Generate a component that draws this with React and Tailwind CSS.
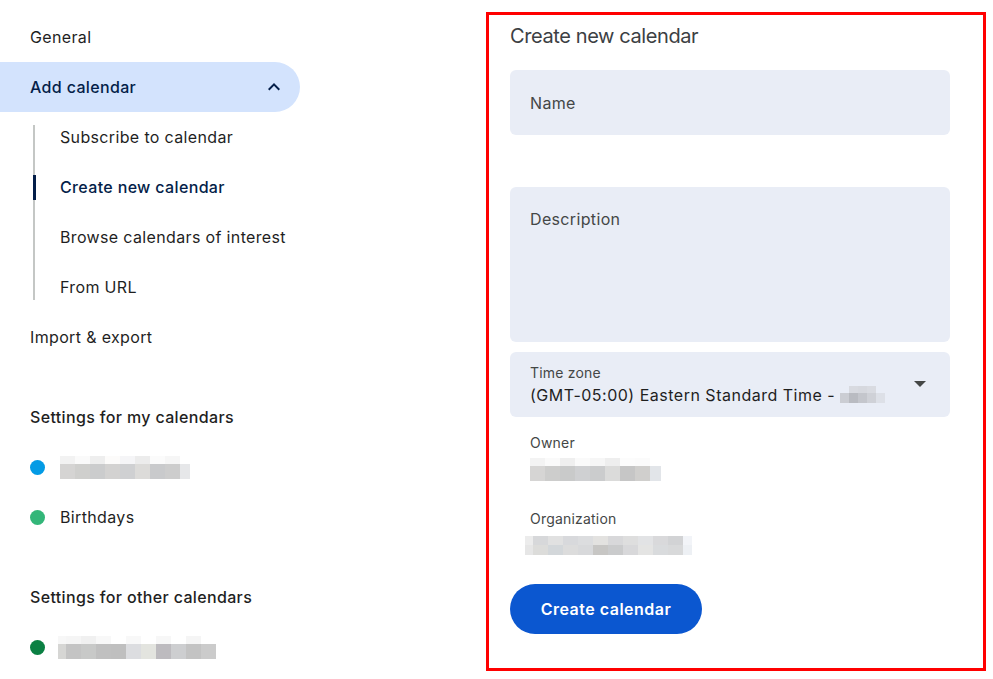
import React from "react";

const font = { fontFamily: "Inter, 'Open Sans', Arial, sans-serif" };

// pixelated (redacted) text block: two rows of cells
const Blur = ({ top, bottom, cell = 15, first = 15, last, topH = 8, botH = 15 }) => {
  const width = (i, n) => (i === 0 ? first : i === n - 1 && last ? last : cell);
  return (
    <div className="flex flex-col">
      <div className="flex">
        {top.map((c, i) => (
          <div key={i} style={{ background: c, width: width(i, top.length), height: topH }} />
        ))}
      </div>
      <div className="flex">
        {bottom.map((c, i) => (
          <div key={i} style={{ background: c, width: width(i, bottom.length), height: botH }} />
        ))}
      </div>
    </div>
  );
};

const NavRow = ({ children, className = "" }) => (
  <div className={`flex h-[50px] items-center pl-[30px] text-[16px] tracking-[0.35px] text-[#1f1f1f] ${className}`}>
    {children}
  </div>
);

const SubRow = ({ children, active }) => (
  <div className="relative flex h-[50px] items-center pl-[60px] text-[16px] tracking-[0.35px]">
    {active && <div className="absolute left-[33px] top-[13px] h-[25px] w-[3px] bg-[#041e49]" />}
    <span className={active ? "font-medium text-[#041e49]" : "text-[#1f1f1f]"}>{children}</span>
  </div>
);

const CalRow = ({ dot, children }) => (
  <div className="flex h-[50px] items-center pl-[30px]">
    <div className="h-[15px] w-[15px] rounded-full" style={{ background: dot }} />
    <div className="ml-[15px] text-[16px] tracking-[0.35px] text-[#1f1f1f]">{children}</div>
  </div>
);

const Sidebar = () => (
  <div className="w-[300px] shrink-0 pt-[12px]">
    <NavRow>General</NavRow>
    <div className="flex h-[50px] items-center justify-between rounded-r-full bg-[#d3e3fd] pl-[30px] pr-[14px]">
      <span className="text-[16px] font-medium tracking-[0.35px] text-[#041e49]">Add calendar</span>
      <svg width="24" height="24" viewBox="0 0 24 24">
        <path d="M7.41 15.41 12 10.83l4.59 4.58L18 14l-6-6-6 6z" fill="#041e49" />
      </svg>
    </div>
    <div className="relative">
      <div className="absolute left-[33px] top-[13px] h-[175px] w-[2px] bg-[#c4c7c5]" />
      <SubRow>Subscribe to calendar</SubRow>
      <SubRow active>Create new calendar</SubRow>
      <SubRow>Browse calendars of interest</SubRow>
      <SubRow>From URL</SubRow>
    </div>
    <NavRow>Import &amp; export</NavRow>
    <NavRow className="mt-[30px] font-medium">Settings for my calendars</NavRow>
    <CalRow dot="#039be5">
      <Blur
        last={10}
        top={["#f2f2f2", "#fafafa", "#eeeeee", "#fcfbfa", "#f5f5f7", "#ececec", "#fbfbfb", "#f6f6f6", "#ffffff"]}
        bottom={["#d5d4d3", "#cfcfcd", "#cbcccd", "#d3d2d1", "#cfd0d2", "#dcdbd9", "#c9cacc", "#cdcdcd", "#e6e7e9"]}
      />
    </CalRow>
    <CalRow dot="#33b679">Birthdays</CalRow>
    <NavRow className="mt-[30px] font-medium">Settings for other calendars</NavRow>
    <div className="flex h-[50px] items-center pl-[30px]">
      <div className="h-[15px] w-[15px] rounded-full bg-[#0b8043]" />
      <div className="ml-[13px]">
        <Blur
          first={8}
          top={["#f7f7f7", "#f5f5f5", "#f0f0f0", "#f8f8f8", "#ffffff", "#f8f8f8", "#ffffff", "#f7f7f7", "#ffffff", "#f5f5f5", "#ffffff"]}
          bottom={["#d6d6d4", "#c4c4c4", "#c8c9c8", "#c0c0c0", "#bfbfbf", "#dcdde0", "#e3e4df", "#bdbbbf", "#cdced0", "#c3c3c3", "#cbcbcb"]}
        />
      </div>
    </div>
  </div>
);

const Field = ({ className = "", children }) => (
  <div className={`rounded-[6px] bg-[#e9edf6] ${className}`}>{children}</div>
);

const CreateCalendar = () => (
  <div className="ml-[186px] mt-[12px] h-[659px] w-[500px] border-[3px] border-[#ff0000] pl-[21px] pt-[7px]">
    <div className="h-[28px] text-[20px] leading-[28px] tracking-[-0.4px] text-[#3c4043]">Create new calendar</div>
    <div className="mt-[20px] w-[440px]">
      <Field className="flex h-[65px] items-center pl-[20px]">
        <span className="text-[16px] tracking-[0.35px] text-[#444746]">Name</span>
      </Field>
      <Field className="mt-[52px] h-[155px] pl-[20px] pt-[20px]">
        <span className="text-[16px] leading-[24px] tracking-[0.35px] text-[#444746]">Description</span>
      </Field>
      <Field className="mt-[10px] flex h-[65px] items-center justify-between pl-[20px] pr-[24px]">
        <div className="flex flex-col">
          <span className="text-[14px] leading-[20px] tracking-[0.2px] text-[#444746]">Time zone</span>
          <div className="flex items-center">
            <span className="text-[16px] leading-[24px] tracking-[0.5px] text-[#1f1f1f]">(GMT-05:00) Eastern Standard Time -&nbsp;</span>
            <Blur
              cell={9}
              first={9}
              topH={7}
              botH={10}
              top={["#e9edf6", "#d8dae0", "#d6d8de", "#d9dbe1", "#e9edf6"]}
              bottom={["#cbcdd3", "#b9bbc1", "#c4c6cc", "#cfd1d7", "#dde0e7"]}
            />
          </div>
        </div>
        <svg width="12" height="6" viewBox="0 0 12 6" className="mb-[2px]">
          <path d="M0 0h12L6 6z" fill="#444746" />
        </svg>
      </Field>
      <div className="pl-[20px] pt-[16px]">
        <div className="text-[14px] leading-[20px] tracking-[0.2px] text-[#444746]">Owner</div>
        <div className="mt-[5px]">
          <Blur
            last={11}
            top={["#f3f3f3", "#fafafa", "#efefef", "#fafafa", "#f6f6f6", "#eeeeee", "#fcfcfc", "#fbfbfb", "#ffffff"]}
            bottom={["#d6d5d4", "#cdcdcc", "#c9caca", "#cfd0d2", "#cbcccd", "#dbdbda", "#c6c6c6", "#d0cfcd", "#e2e5e9"]}
          />
        </div>
        <div className="mt-[28px] text-[14px] leading-[20px] tracking-[0.2px] text-[#444746]">Organization</div>
        <div className="-ml-[5px] mt-[7px]">
          <Blur
            first={8}
            last={9}
            topH={9}
            botH={10}
            top={["#ececec", "#d7d8da", "#e1e1e1", "#d8d9dc", "#dcdddf", "#e3e2e0", "#d8d8da", "#dedede", "#e2e3e5", "#d9d9db", "#d2d3d5", "#f2f4f8"]}
            bottom={["#e6e6e6", "#dcdcda", "#d3d7da", "#dcdcdc", "#d8d9db", "#c7c6c4", "#cacbcc", "#d8d8da", "#e4e4e3", "#d9dbdd", "#d8d9da", "#edf0f4"]}
          />
        </div>
      </div>
      <button className="mt-[29px] flex h-[50px] w-[192px] items-center justify-center rounded-full bg-[#0b57d0] text-[16px] font-semibold tracking-[0.5px] text-white">
        Create calendar
      </button>
    </div>
  </div>
);

const App = () => (
  <div className="flex h-[679px] w-[993px] overflow-hidden bg-white" style={font}>
    <Sidebar />
    <CreateCalendar />
  </div>
);

export default App;
